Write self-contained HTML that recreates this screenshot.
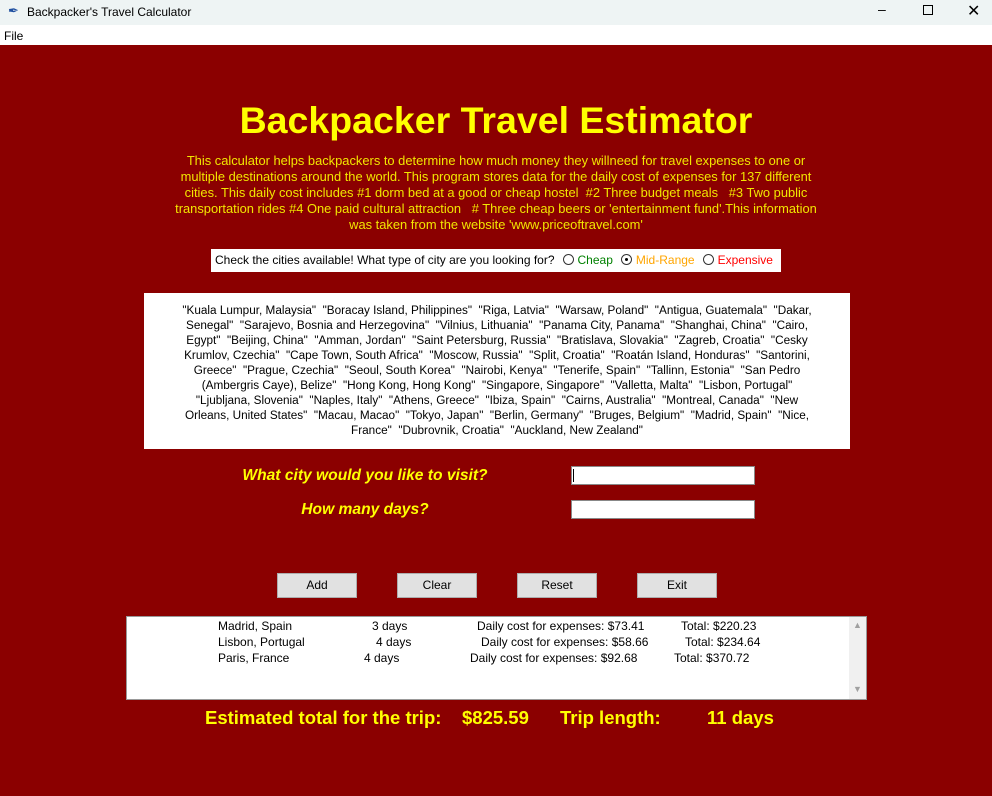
<!DOCTYPE html>
<html><head><meta charset="utf-8"><style>
*{margin:0;padding:0;box-sizing:border-box}
body{width:992px;height:796px;background:#8b0000;position:relative;overflow:hidden;font-family:"Liberation Sans",Arial,sans-serif}
.a{position:absolute}
.tb{left:0;top:0;width:992px;height:25px;background:#eef4f4;font-size:12px;color:#000}
.mb{left:0;top:25px;width:992px;height:20px;background:#fff;font-size:12px}
.c{text-align:center;white-space:nowrap}
.btn{background:#e1e1e1;border:1px solid #adadad;font-size:12px;text-align:center;line-height:23px;width:80px;height:25px;top:573px}
.rad{display:inline-block;width:11px;height:11px;border:1px solid #333;border-radius:50%;vertical-align:-1px;margin:0 4px 0 8px;background:#fff;position:relative}
.lr{position:absolute;font-size:12px;white-space:nowrap}
.bt{font-size:18.5px;font-weight:bold;color:#ffff00;white-space:nowrap;top:707px}
</style></head><body>
<div class="a tb"><span class="a" style="left:8px;top:3px;font-size:13px;color:#2050a0">&#x2712;</span><span class="a" style="left:27px;top:5px">Backpacker's Travel Calculator</span>
<span class="a" style="left:878px;top:1px;font-size:14px">&#x2013;</span>
<span class="a" style="left:923px;top:5px;width:10px;height:10px;border:1px solid #000"></span>
<span class="a" style="left:967px;top:1px;font-size:16px">&#x2715;</span></div>
<div class="a mb"><span class="a" style="left:4px;top:4px">File</span></div>
<div class="a c" style="left:0;width:992px;top:99px;font-size:37.5px;font-weight:bold;color:#ffff00">Backpacker Travel Estimator</div>
<div class="a c" style="left:0;width:992px;top:153px;font-size:12.9px;line-height:16px;color:#f2e600">This calculator helps backpackers to determine how much money they willneed for travel expenses to one or<br>multiple destinations around the world. This program stores data for the daily cost of expenses for 137 different<br>cities. This daily cost includes #1 dorm bed at a good or cheap hostel &nbsp;#2 Three budget meals &nbsp;&nbsp;#3 Two public<br>transportation rides #4 One paid cultural attraction &nbsp;&nbsp;# Three cheap beers or 'entertainment fund'.This information<br>was taken from the website 'www.priceoftravel.com'</div>
<div class="a" style="left:211px;top:249px;width:570px;height:23px;background:#fff;font-size:12px;line-height:23px;padding-left:4px;white-space:nowrap">Check the cities available! What type of city are you looking for?<span class="rad"></span><span style="color:#008000">Cheap</span><span class="rad"><span class="a" style="left:3px;top:3px;width:3px;height:3px;background:#000;border-radius:50%"></span></span><span style="color:#ffa500">Mid-Range</span><span class="rad"></span><span style="color:#ff0000">Expensive</span></div>
<div class="a c" style="left:144px;top:293px;width:706px;height:156px;background:#fff;font-size:11.75px;line-height:15px;padding-top:10px;color:#000">"Kuala Lumpur, Malaysia" &nbsp;"Boracay Island, Philippines" &nbsp;"Riga, Latvia" &nbsp;"Warsaw, Poland" &nbsp;"Antigua, Guatemala" &nbsp;"Dakar,<br>Senegal" &nbsp;"Sarajevo, Bosnia and Herzegovina" &nbsp;"Vilnius, Lithuania" &nbsp;"Panama City, Panama" &nbsp;"Shanghai, China" &nbsp;"Cairo,<br>Egypt" &nbsp;"Beijing, China" &nbsp;"Amman, Jordan" &nbsp;"Saint Petersburg, Russia" &nbsp;"Bratislava, Slovakia" &nbsp;"Zagreb, Croatia" &nbsp;"Cesky<br>Krumlov, Czechia" &nbsp;"Cape Town, South Africa" &nbsp;"Moscow, Russia" &nbsp;"Split, Croatia" &nbsp;"Roatán Island, Honduras" &nbsp;"Santorini,<br>Greece" &nbsp;"Prague, Czechia" &nbsp;"Seoul, South Korea" &nbsp;"Nairobi, Kenya" &nbsp;"Tenerife, Spain" &nbsp;"Tallinn, Estonia" &nbsp;"San Pedro<br>(Ambergris Caye), Belize" &nbsp;"Hong Kong, Hong Kong" &nbsp;"Singapore, Singapore" &nbsp;"Valletta, Malta" &nbsp;"Lisbon, Portugal"<br>"Ljubljana, Slovenia" &nbsp;"Naples, Italy" &nbsp;"Athens, Greece" &nbsp;"Ibiza, Spain" &nbsp;"Cairns, Australia" &nbsp;"Montreal, Canada" &nbsp;"New<br>Orleans, United States" &nbsp;"Macau, Macao" &nbsp;"Tokyo, Japan" &nbsp;"Berlin, Germany" &nbsp;"Bruges, Belgium" &nbsp;"Madrid, Spain" &nbsp;"Nice,<br>France" &nbsp;"Dubrovnik, Croatia" &nbsp;"Auckland, New Zealand"</div>
<div class="a c" style="left:215px;width:300px;top:467px;font-size:15.6px;font-weight:bold;font-style:italic;color:#ffff00">What city would you like to visit?</div>
<div class="a c" style="left:215px;width:300px;top:501px;font-size:15.6px;font-weight:bold;font-style:italic;color:#ffff00">How many days?</div>
<div class="a" style="left:571px;top:466px;width:184px;height:19px;background:#fff;border:1px solid #888"><span class="a" style="left:1px;top:2px;width:1px;height:13px;background:#000"></span></div>
<div class="a" style="left:571px;top:500px;width:184px;height:19px;background:#fff;border:1px solid #888"></div>
<div class="a btn" style="left:277px">Add</div>
<div class="a btn" style="left:397px">Clear</div>
<div class="a btn" style="left:517px">Reset</div>
<div class="a btn" style="left:637px">Exit</div>
<div class="a" style="left:126px;top:616px;width:741px;height:84px;background:#fff;border:1px solid #999">
<div class="a" style="right:0;top:0;width:17px;height:82px;background:#f0f0f0;color:#a0a0a0;font-size:9px;text-align:center"><div style="margin-top:3px">&#x25B2;</div><div style="margin-top:54px">&#x25BC;</div></div>
<span class="lr" style="left:91px;top:2px">Madrid, Spain</span><span class="lr" style="left:245px;top:2px">3 days</span><span class="lr" style="left:350px;top:2px">Daily cost for expenses: $73.41</span><span class="lr" style="left:554px;top:2px">Total: $220.23</span>
<span class="lr" style="left:91px;top:18px">Lisbon, Portugal</span><span class="lr" style="left:249px;top:18px">4 days</span><span class="lr" style="left:354px;top:18px">Daily cost for expenses: $58.66</span><span class="lr" style="left:558px;top:18px">Total: $234.64</span>
<span class="lr" style="left:91px;top:34px">Paris, France</span><span class="lr" style="left:237px;top:34px">4 days</span><span class="lr" style="left:343px;top:34px">Daily cost for expenses: $92.68</span><span class="lr" style="left:547px;top:34px">Total: $370.72</span>
</div>
<div class="a bt" style="left:205px">Estimated total for the trip:</div>
<div class="a bt" style="left:462px">$825.59</div>
<div class="a bt" style="left:560px">Trip length:</div>
<div class="a bt" style="left:707px">11 days</div>
</body></html>
